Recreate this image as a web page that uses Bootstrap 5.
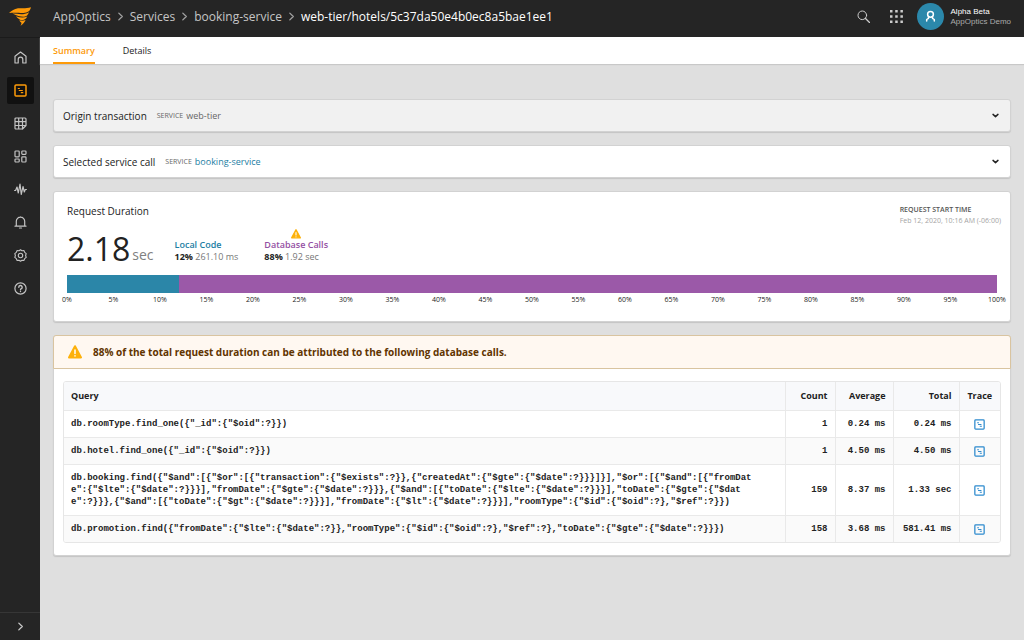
<!DOCTYPE html>
<html lang="en">
<head>
<meta charset="utf-8">
<meta name="viewport" content="width=device-width, initial-scale=1">
<title>AppOptics – Trace summary</title>
<link href="https://cdn.jsdelivr.net/npm/bootstrap@5.3.0/dist/css/bootstrap.min.css" rel="stylesheet">
<style>
  body { font-family: "Open Sans", sans-serif; font-size: 10px; line-height: 14px; color: #222; background: #dfdfdf; }
  a { text-decoration: none; }
  svg { display: block; fill: none; stroke: currentColor; stroke-linecap: round; stroke-linejoin: round; }
  button { background: none; border: 0; padding: 0; color: inherit; }
  .app-bar { height: 37px; background: #252525; padding: 0 13px 4px 0; }
  .brand-cell { width: 40px; }
  .side-bar { width: 40px; background: #252525; color: #c8c8c8; border-top: 1px solid #1b1b1b; }
  .side-bar .nav { padding-top: 6px; gap: 6px; }
  .side-link { width: 27px; height: 27px; border-radius: 2px; color: #c4c4c4; }
  .side-link.active { background: #111; color: #fd9a09; }
  .side-toggle { height: 28px; border-top: 1px solid #363636; }
  .crumbs { font-size: 12px; line-height: 18px; padding-left: 13px; }
  .crumbs a { color: #c6c6c6; }
  .crumbs .sep { color: #a0a0a0; margin: 0 5px; }
  .crumbs .here { color: #fff; font-weight: 500; }
  .tools { gap: 20px; margin-right: 14px; color: #ccc; }
  .user { gap: 7px; }
  .avatar { width: 27px; height: 27px; background: #2b88ab; color: #fff; }
  .who { font-family: "Liberation Sans", sans-serif; font-size: 8px; line-height: 10px; color: #aaa; }
  .who-name { color: #fff; }
  .tab-bar { background: #fff; padding-left: 13px; gap: 28px; box-shadow: 0 1px 1px #c8c8c8; }
  .tab-bar .nav-link { padding: 7px 0 4px; font-size: 9px; line-height: 14px; color: #222; border-bottom: 2px solid transparent; }
  .tab-bar .nav-link.active { color: #fd9a09; font-weight: 600; border-color: #fd9a09; }
  .page { padding: 35px 13px 20px 13px; gap: 13px; }
  .panel { background: #fff; border: 1px solid #d2d2d2; border-radius: 3px; box-shadow: 0 1px 1px #c4c4c4; }
  .fold { height: 33px; padding: 0 10px 0 9px; }
  .fold.idle { background: #f1f1f1; }
  .fold h2, .duration h2 { font-size: 10px; line-height: 14px; font-weight: 400; margin: 0; }
  .tag { font-size: 7px; color: #666; text-transform: uppercase; margin: 0 3px 0 10px; }
  .val { font-size: 9px; color: #666; }
  .val a, .blue { color: #1c7ea3; }
  .muted { color: #777; }
  .duration { padding: 12px 13px 15px; }
  .start { font-size: 7px; line-height: 11px; color: #a4a4a4; margin-right: -4px; }
  .start dt { font-weight: 600; color: #555; text-transform: uppercase; }
  .totals { margin-top: 3px; gap: 21px; }
  .big { font-size: 32px; line-height: 34px; }
  .unit { font-size: 14px; line-height: 22px; color: #808080; margin-left: 2px; }
  .parts { gap: 26px; padding-bottom: 3px; }
  .part { font-size: 9px; line-height: 12px; }
  .part .name { font-weight: 600; }
  .purple { color: #9450a3; }
  .split { height: 18px; margin-top: 9px; border-radius: 0; }
  .split .local { background: #2b86a8; }
  .split .db { background: #9b59a8; }
  .scale { font-size: 7px; line-height: 12px; padding-top: 1px; }
  .scale span { width: 0; }
  .notice { height: 34px; margin: -1px -1px 0; padding-left: 14px; gap: 11px; border: 1px solid #d9c4a0; border-radius: 3px 3px 0 0; background: #fff8f1; color: #613400; font-size: 10px; font-weight: 700; }
  .query-wrap { padding: 12px 9px 12px; }
  .query-box { border: 1px solid #e6e6e6; border-radius: 3px; overflow: hidden; }
  .queries { font-family: "Liberation Mono", monospace; font-size: 9px; line-height: 12px; }
  .queries > :not(caption) > * > * { padding: 7px; border: 0 solid #e9e9e9; border-left-width: 1px; border-bottom-width: 1px; color: #222; vertical-align: middle; }
  .queries tr > :first-child { border-left-width: 0; }
  .queries tbody tr:last-child > * { border-bottom-width: 0; }
  .queries th { font-family: "Open Sans", sans-serif; background: #f8f9fb; font-weight: 700; line-height: 14px; }
  .queries tbody tr:nth-child(even) td { background: #fafafa; }
  .queries td { font-weight: 700; }
  .c-count { width: 50px; } .c-avg { width: 58px; } .c-total { width: 66px; } .c-trace { width: 41px; }
  .trace { color: #2e8bce; }
</style>
</head>
<body>
<svg width="0" height="0" class="position-absolute" aria-hidden="true">
  <symbol id="i-warn" viewBox="0 0 14 14"><path d="M7 1.200 13 12.400H1z" fill="#fdb10a" stroke="#fdb10a" stroke-width="2"/><path d="M7 5v3.500M7 10.800v.2" stroke="#fff" stroke-width="1.500"/></symbol>
  <symbol id="i-trace" viewBox="0 0 13 13"><rect x="1" y="1" width="11" height="11" rx="1" stroke-width="1.500"/><path d="M3.800 4.500h2M4.800 6.500h4M6.800 8.700h2.500" stroke-width="1.200" stroke-linecap="butt"/></symbol>
  <symbol id="i-down" viewBox="0 0 8 8"><path d="M1.800 3 4 5 6.200 3" stroke-width="1.300"/></symbol>
  <symbol id="i-right" viewBox="0 0 8 8"><path d="M2.500 1 5.600 4 2.500 7" stroke-width="1.200"/></symbol>
</svg>
<div class="min-vh-100 d-flex flex-column">
  <header class="app-bar d-flex align-items-center">
    <a href="#" class="brand-cell d-flex align-items-center justify-content-center" aria-label="Home">
      <svg width="22" height="19" viewBox="0 0 22 19" style="fill:#fd9a09;stroke:none"><path d="M0 6C3 3.500 5 2 9 1.300 13 1 17 1.800 22 .2 21.500 2.500 20.500 4 18.500 5 14 7 9 5 0 6z"/><path d="M3.500 6.600C9 6.600 14 8.600 20 5.200 19 8 17.500 9.300 15 9.800 11 9.800 8 9 3.500 6.600z"/><path d="M7 9.200C11 10.800 14.500 11 18.300 9.600 17 12.300 15 13.200 12.500 13.200 10.500 12.700 8.800 11.300 7 9.200z"/><path d="M10.300 13.300c2.500.7 4.200.4 6.300-.3-.8 2.200-2.600 4.100-5 5.700.6-1.300.9-2 .8-3-.9-.5-1.600-1.300-2.100-2.400z"/></svg>
    </a>
    <nav aria-label="Breadcrumb" class="flex-grow-1">
      <ol class="crumbs list-unstyled d-flex align-items-center mb-0 text-nowrap">
        <li><a href="#">AppOptics</a></li>
        <li class="sep"><svg width="9" height="9"><use href="#i-right"/></svg></li>
        <li><a href="#">Services</a></li>
        <li class="sep"><svg width="9" height="9"><use href="#i-right"/></svg></li>
        <li><a href="#">booking-service</a></li>
        <li class="sep"><svg width="9" height="9"><use href="#i-right"/></svg></li>
        <li class="here" aria-current="page">web-tier/hotels/5c37da50e4b0ec8a5bae1ee1</li>
      </ol>
    </nav>
    <div class="tools d-flex">
      <button aria-label="Search"><svg width="13" height="13" viewBox="0 0 13 13"><circle cx="5.300" cy="5.300" r="4.300"/><path d="m8.500 8.500 4 4" stroke-width="1.300"/></svg></button>
      <button aria-label="Apps"><svg width="13" height="13" viewBox="0 0 13 13" style="fill:currentColor;stroke:none"><path d="M0 0h2.500v2.500H0zM5.200 0h2.500v2.500H5.200zM10.400 0h2.500v2.500h-2.500zM0 5.200h2.500v2.500H0zM5.200 5.200h2.500v2.500H5.200zM10.400 5.200h2.500v2.500h-2.500zM0 10.400h2.500v2.500H0zM5.200 10.400h2.500v2.500H5.200zM10.400 10.400h2.500v2.500h-2.500z"/></svg></button>
    </div>
    <button class="user d-flex align-items-center text-start">
      <span class="avatar rounded-circle d-flex align-items-center justify-content-center"><svg width="11" height="13" viewBox="0 0 11 13" stroke-width="1.500"><circle cx="5.500" cy="4.300" r="2.900"/><path d="M3.500 6.800v1.500L1.700 9.500V11M7.500 6.800v1.500l1.800 1.200V11"/></svg></span>
      <span class="who d-flex flex-column"><span class="who-name">Alpha Beta</span><span>AppOptics Demo</span></span>
    </button>
  </header>
  <div class="d-flex flex-grow-1">
    <aside class="side-bar flex-shrink-0 d-flex flex-column">
      <nav class="nav flex-column align-items-center flex-nowrap flex-grow-1" aria-label="Main">
        <a href="#" class="side-link d-flex align-items-center justify-content-center" aria-label="Overview"><svg width="13" height="13" viewBox="0 0 13 13" stroke-width="1.200"><path d="M1 5.300 6.500 1 12 5.300V12H8.800V8.500a2.300 2.300 0 0 0-4.600 0V12H1z"/></svg></a>
        <a href="#" class="side-link active d-flex align-items-center justify-content-center" aria-label="Services"><svg width="13" height="13"><use href="#i-trace"/></svg></a>
        <a href="#" class="side-link d-flex align-items-center justify-content-center" aria-label="Hosts"><svg width="13" height="13" viewBox="0 0 13 13" stroke-width="1.200"><path d="M2 1h9q1 0 1 1v6.500H8.500V12H2q-1 0-1-1V2q0-1 1-1zM1 4.700h11M1 8.500h7.500M4.700 1v11M8.500 1v7.500M8.500 12 12 8.500"/></svg></a>
        <a href="#" class="side-link d-flex align-items-center justify-content-center" aria-label="Dashboards"><svg width="13" height="13" viewBox="0 0 13 13" stroke-width="1.200"><rect x="1" y="1" width="4.200" height="5.800" rx=".8"/><rect x="7.800" y="1" width="4.200" height="3.400" rx=".8"/><rect x="1" y="9" width="4.200" height="3" rx=".8"/><rect x="7.800" y="6.800" width="4.200" height="5.200" rx=".8"/></svg></a>
        <a href="#" class="side-link d-flex align-items-center justify-content-center" aria-label="Metrics"><svg width="13" height="13" viewBox="0 0 13 13" stroke-width="1.200"><path d="M.6 7.500h1L3 4l1.300 6L6 1l1.300 10.500L9 3.500 10.300 9l1-2.500h1.100"/></svg></a>
        <a href="#" class="side-link d-flex align-items-center justify-content-center" aria-label="Alerts"><svg width="13" height="13" viewBox="0 0 13 13" stroke-width="1.200"><path d="M1 10.200h11M2.300 10V5.300a4.200 4.200 0 0 1 8.400 0V10M5.500 12h2M6.500 1V.8"/></svg></a>
        <a href="#" class="side-link d-flex align-items-center justify-content-center" aria-label="Settings"><svg width="13" height="13" viewBox="0 0 13 13" stroke-width="1.100"><path d="M6.500.8 8 1.800l2-.2.700 1.800 1.500 1.200-.6 1.900.6 1.900-1.500 1.200-.7 1.800-2-.2-1.500 1-1.500-1-2 .2-.7-1.800L.8 8.400l.6-1.900-.6-1.900 1.500-1.200L3 1.600l2 .2z"/><circle cx="6.500" cy="6.500" r="2.200"/></svg></a>
        <a href="#" class="side-link d-flex align-items-center justify-content-center" aria-label="Help"><svg width="13" height="13" viewBox="0 0 13 13" stroke-width="1.200"><circle cx="6.500" cy="6.500" r="5.600"/><path d="M4.800 5.200a1.700 1.700 0 1 1 2.500 1.500q-.8.400-.8 1M6.500 9.500v.1" stroke-width="1.400"/></svg></a>
      </nav>
      <button class="side-toggle d-flex align-items-center justify-content-center" aria-label="Expand menu"><svg width="9" height="9"><use href="#i-right"/></svg></button>
    </aside>
    <main class="flex-grow-1">
      <nav class="tab-bar nav" aria-label="Views">
        <a class="nav-link active" href="#" aria-current="page">Summary</a>
        <a class="nav-link" href="#">Details</a>
      </nav>
      <div class="page d-flex flex-column">
        <section class="panel fold idle d-flex align-items-center">
          <h2>Origin transaction</h2>
          <span class="tag">Service</span><span class="val">web-tier</span>
          <button class="ms-auto" aria-label="Expand origin transaction"><svg width="9" height="9"><use href="#i-down"/></svg></button>
        </section>
        <section class="panel fold d-flex align-items-center">
          <h2>Selected service call</h2>
          <span class="tag">Service</span><span class="val"><a href="#">booking-service</a></span>
          <button class="ms-auto" aria-label="Expand selected service call"><svg width="9" height="9"><use href="#i-down"/></svg></button>
        </section>
        <section class="panel duration">
          <div class="d-flex justify-content-between align-items-start">
            <h2>Request Duration</h2>
            <dl class="start mb-0"><dt>Request start time</dt><dd class="mb-0">Feb 12, 2020, 10:16 AM (-06:00)</dd></dl>
          </div>
          <div class="totals d-flex align-items-end">
            <div class="d-flex align-items-end"><span class="big">2.18</span><span class="unit">sec</span></div>
            <div class="parts d-flex align-items-end">
              <div class="part"><div class="name blue">Local Code</div><strong>12%</strong> <span class="muted">261.10 ms</span></div>
              <div class="part"><svg class="mx-auto" width="10" height="10"><use href="#i-warn"/></svg><div class="name purple">Database Calls</div><strong>88%</strong> <span class="muted">1.92 sec</span></div>
            </div>
          </div>
          <div class="progress split"><div class="progress-bar local" style="width:12%"></div><div class="progress-bar db" style="width:88%"></div></div>
          <div class="scale d-flex justify-content-between">
            <span class="d-flex justify-content-center">0%</span><span class="d-flex justify-content-center">5%</span><span class="d-flex justify-content-center">10%</span><span class="d-flex justify-content-center">15%</span><span class="d-flex justify-content-center">20%</span><span class="d-flex justify-content-center">25%</span><span class="d-flex justify-content-center">30%</span><span class="d-flex justify-content-center">35%</span><span class="d-flex justify-content-center">40%</span><span class="d-flex justify-content-center">45%</span><span class="d-flex justify-content-center">50%</span><span class="d-flex justify-content-center">55%</span><span class="d-flex justify-content-center">60%</span><span class="d-flex justify-content-center">65%</span><span class="d-flex justify-content-center">70%</span><span class="d-flex justify-content-center">75%</span><span class="d-flex justify-content-center">80%</span><span class="d-flex justify-content-center">85%</span><span class="d-flex justify-content-center">90%</span><span class="d-flex justify-content-center">95%</span><span class="d-flex justify-content-center">100%</span>
          </div>
        </section>
        <section class="panel">
          <div class="notice d-flex align-items-center" role="alert"><svg width="14" height="14"><use href="#i-warn"/></svg><span>88% of the total request duration can be attributed to the following database calls.</span></div>
          <div class="query-wrap">
            <div class="query-box">
              <table class="table queries mb-0">
                <thead><tr><th scope="col">Query</th><th scope="col" class="c-count text-end">Count</th><th scope="col" class="c-avg text-end">Average</th><th scope="col" class="c-total text-end">Total</th><th scope="col" class="c-trace text-center">Trace</th></tr></thead>
                <tbody>
                  <tr><td>db.roomType.find_one({"_id":{"$oid":?}})</td><td class="text-end">1</td><td class="text-end text-nowrap">0.24 ms</td><td class="text-end text-nowrap">0.24 ms</td><td><a href="#" class="trace d-flex justify-content-center" aria-label="Open trace"><svg width="11" height="11"><use href="#i-trace"/></svg></a></td></tr>
                  <tr><td>db.hotel.find_one({"_id":{"$oid":?}})</td><td class="text-end">1</td><td class="text-end text-nowrap">4.50 ms</td><td class="text-end text-nowrap">4.50 ms</td><td><a href="#" class="trace d-flex justify-content-center" aria-label="Open trace"><svg width="11" height="11"><use href="#i-trace"/></svg></a></td></tr>
                  <tr><td class="text-break">db.booking.find({"$and":[{"$or":[{"transaction":{"$exists":?}},{"createdAt":{"$gte":{"$date":?}}}]}],"$or":[{"$and":[{"fromDat<br>e":{"$lte":{"$date":?}}}],"fromDate":{"$gte":{"$date":?}}},{"$and":[{"toDate":{"$lte":{"$date":?}}}],"toDate":{"$gte":{"$dat<br>e":?}}},{"$and":[{"toDate":{"$gt":{"$date":?}}}],"fromDate":{"$lt":{"$date":?}}}],"roomType":{"$id":{"$oid":?},"$ref":?}})</td><td class="text-end">159</td><td class="text-end text-nowrap">8.37 ms</td><td class="text-end text-nowrap">1.33 sec</td><td><a href="#" class="trace d-flex justify-content-center" aria-label="Open trace"><svg width="11" height="11"><use href="#i-trace"/></svg></a></td></tr>
                  <tr><td class="text-break">db.promotion.find({"fromDate":{"$lte":{"$date":?}},"roomType":{"$id":{"$oid":?},"$ref":?},"toDate":{"$gte":{"$date":?}}})</td><td class="text-end">158</td><td class="text-end text-nowrap">3.68 ms</td><td class="text-end text-nowrap">581.41 ms</td><td><a href="#" class="trace d-flex justify-content-center" aria-label="Open trace"><svg width="11" height="11"><use href="#i-trace"/></svg></a></td></tr>
                </tbody>
              </table>
            </div>
          </div>
        </section>
      </div>
    </main>
  </div>
</div>
<script src="https://cdn.jsdelivr.net/npm/bootstrap@5.3.0/dist/js/bootstrap.bundle.min.js"></script>
</body>
</html>
